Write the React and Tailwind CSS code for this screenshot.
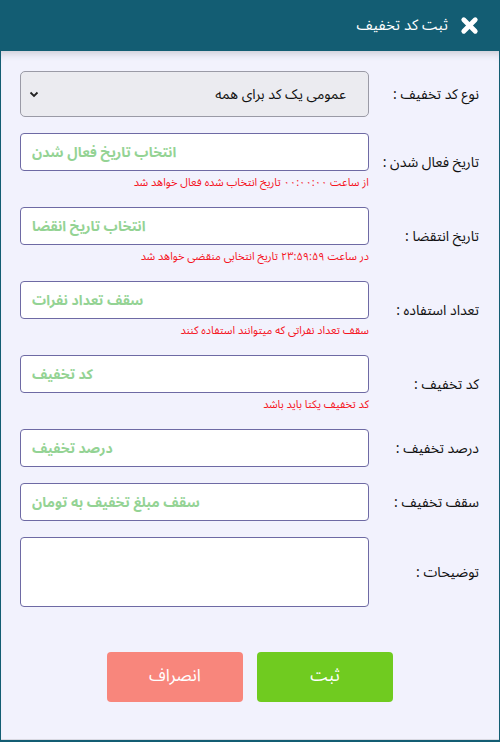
import { X } from 'lucide-react'

const font = { fontFamily: '"Noto Sans Arabic", "DejaVu Sans", sans-serif' }

// one form row: label column on the right, field on the left
const Row = ({ label, children }) => (
  <div className="flex items-center">
    <label className="w-[111px] shrink-0 pr-[1px] text-[14px] text-[#111]">{label}</label>
    <div className="w-[349px]">{children}</div>
  </div>
)

const Field = ({ placeholder, hint }) => (
  <div>
    <input
      readOnly
      placeholder={placeholder}
      className="block h-[38px] w-full rounded-[4px] border border-[#6e6aa4] bg-white px-[11px] text-left text-[14px] font-bold placeholder:text-[#94d394] focus:outline-none"
    />
    {hint && (
      <p className="pt-[4px] text-[11px] leading-[16px] text-[#f5141e]">{hint}</p>
    )}
  </div>
)

export default function App() {
  return (
    <div dir="rtl" style={font} className="flex min-h-[742px] w-[500px] flex-col bg-[#135d73] px-[1px] pb-[2px]">
      <div className="flex h-[51px] items-center gap-[10px] pr-[18px] text-white">
        <X className="h-[23px] w-[23px]" strokeWidth={5} />
        <h1 className="text-[15px]">ثبت کد تخفیف</h1>
      </div>

      <div className="flex flex-1 flex-col border-b border-[#d9d9e2] bg-[#f2f2fd] pl-[19px] pr-[19px] pt-[20px] shadow-[inset_0_8px_8px_-6px_rgba(0,0,0,0.18)]">
        <div className="flex flex-col gap-[16px]">
          <Row label="نوع کد تخفیف :">
            <div className="flex h-[46px] items-center justify-between rounded-[5px] border border-[#9a9aa6] bg-[#ebebf0] pl-[8px] pr-[22px] text-[14px] text-[#111]">
              <span>عمومی یک کد برای همه</span>
              <svg width="10" height="7" viewBox="0 0 10 7" fill="none" stroke="#222" strokeWidth="1.8">
                <path d="M1.5 1.5 L5 5 L8.5 1.5" />
              </svg>
            </div>
          </Row>
          <Row label="تاریخ فعال شدن :">
            <Field placeholder="انتخاب تاریخ فعال شدن" hint="از ساعت ۰۰:۰۰:۰۰ تاریخ انتخاب شده فعال خواهد شد" />
          </Row>
          <Row label="تاریخ انتقضا :">
            <Field placeholder="انتخاب تاریخ انقضا" hint="در ساعت ۲۳:۵۹:۵۹ تاریخ انتخابی منقضی خواهد شد" />
          </Row>
          <Row label="تعداد استفاده :">
            <Field placeholder="سقف تعداد نفرات" hint="سقف تعداد نفراتی که میتوانند استفاده کنند" />
          </Row>
          <Row label="کد تخفیف :">
            <Field placeholder="کد تخفیف" hint="کد تخفیف یکتا باید باشد" />
          </Row>
          <Row label="درصد تخفیف :">
            <Field placeholder="درصد تخفیف" />
          </Row>
          <Row label="سقف تخفیف :">
            <Field placeholder="سقف مبلغ تخفیف به تومان" />
          </Row>
          <Row label="توضیحات :">
            <textarea
              readOnly
              className="block h-[70px] w-full resize-none rounded-[4px] border border-[#6e6aa4] bg-white focus:outline-none"
            />
          </Row>
        </div>

        <div className="mt-[45px] flex justify-center gap-[14px]">
          <button className="h-[50px] w-[136px] rounded-[4px] bg-[#70cb20] text-[17px] text-white">ثبت</button>
          <button className="h-[50px] w-[136px] rounded-[4px] bg-[#f8867c] text-[17px] text-white">انصراف</button>
        </div>
      </div>
    </div>
  )
}
